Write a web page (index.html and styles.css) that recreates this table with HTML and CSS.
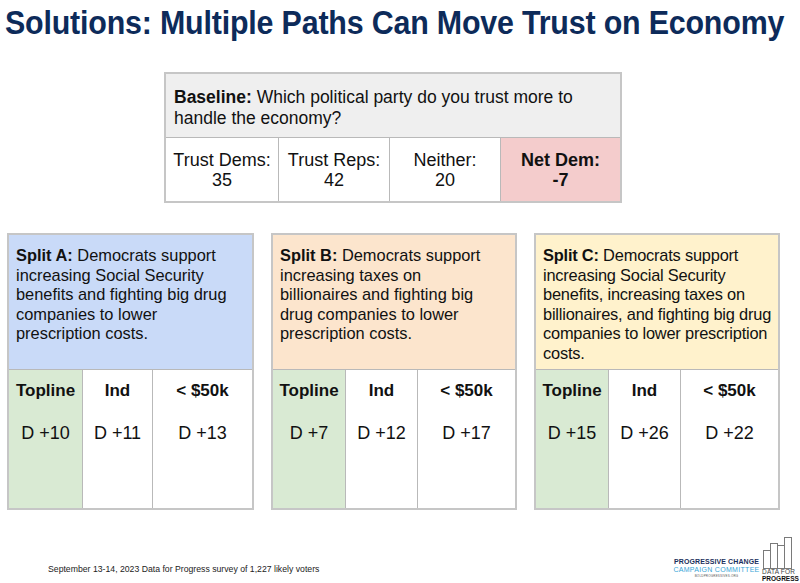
FILE: index.html
```html
<!DOCTYPE html>
<html lang="en">
<head>
<meta charset="utf-8">
<title>Solutions: Multiple Paths Can Move Trust on Economy</title>
<link rel="stylesheet" href="styles.css">
</head>
<body>
<h1 class="title"><span class="title-text">Solutions: Multiple Paths Can Move Trust on Economy</span></h1>

<section class="baseline">
  <div class="baseline-q"><b>Baseline:</b> Which political party do you trust more to<br>handle the economy?</div>
  <div class="baseline-row">
    <div class="bcell c1">Trust Dems:<br>35</div>
    <div class="bcell c2">Trust Reps:<br>42</div>
    <div class="bcell c3">Neither:<br>20</div>
    <div class="bcell net"><b>Net Dem:<br>-7</b></div>
  </div>
</section>

<section class="splits">
  <div class="split split-a">
    <div class="split-q"><b>Split A:</b> Democrats support<br>increasing Social Security<br>benefits and fighting big drug<br>companies to lower<br>prescription costs.</div>
    <div class="split-table">
      <div class="scol topline"><div class="sh">Topline</div><div class="sv">D +10</div></div>
      <div class="scol"><div class="sh">Ind</div><div class="sv">D +11</div></div>
      <div class="scol"><div class="sh">&lt; $50k</div><div class="sv">D +13</div></div>
    </div>
  </div>
  <div class="split split-b">
    <div class="split-q"><b>Split B:</b> Democrats support<br>increasing taxes on<br>billionaires and fighting big<br>drug companies to lower<br>prescription costs.</div>
    <div class="split-table">
      <div class="scol topline"><div class="sh">Topline</div><div class="sv">D +7</div></div>
      <div class="scol"><div class="sh">Ind</div><div class="sv">D +12</div></div>
      <div class="scol"><div class="sh">&lt; $50k</div><div class="sv">D +17</div></div>
    </div>
  </div>
  <div class="split split-c">
    <div class="split-q"><b>Split C:</b> Democrats support<br>increasing Social Security<br>benefits, increasing taxes on<br>billionaires, and fighting big drug<br>companies to lower prescription<br>costs.</div>
    <div class="split-table">
      <div class="scol topline"><div class="sh">Topline</div><div class="sv">D +15</div></div>
      <div class="scol"><div class="sh">Ind</div><div class="sv">D +26</div></div>
      <div class="scol"><div class="sh">&lt; $50k</div><div class="sv">D +22</div></div>
    </div>
  </div>
</section>

<footer class="footer">
  <div class="note">September 13-14, 2023 Data for Progress survey of 1,227 likely voters</div>
  <div class="pccc">
    <div class="pccc-1">PROGRESSIVE CHANGE</div>
    <div class="pccc-2">CAMPAIGN COMMITTEE</div>
    <div class="pccc-3">BOLDPROGRESSIVES.ORG</div>
  </div>
  <div class="dfp">
    <svg class="dfp-bars" width="32" height="32" viewBox="0 0 32 32">
      <g fill="#fff" stroke="#7a7a7a" stroke-width="1">
        <rect x="1.5" y="13.5" width="7" height="18"/>
        <rect x="8.5" y="6.5" width="7" height="25"/>
        <rect x="15.5" y="8.5" width="7" height="23"/>
        <rect x="22.5" y="0.5" width="7" height="31"/>
      </g>
    </svg>
    <div class="dfp-1">DATA FOR</div>
    <div class="dfp-2">PROGRESS</div>
  </div>
</footer>
</body>
</html>
```

FILE: styles.css
```css
* { box-sizing: border-box; }

html, body {
  margin: 0;
  padding: 0;
  background: #ffffff;
}

body {
  width: 800px;
  height: 583px;
  overflow: hidden;
  display: flex;
  flex-direction: column;
  font-family: "Liberation Sans", Arial, sans-serif;
  color: #111;
}

.title {
  margin: 0;
  padding: 4px 0 0 5px;
  width: 800px;
  height: 42px;
  overflow: hidden;
  font-family: "Liberation Sans", Arial, sans-serif;
  font-weight: bold;
  font-size: 33px;
  line-height: 38px;
  color: #0d2b5a;
  white-space: nowrap;
}

.title-text {
  display: inline-block;
  transform: scaleX(0.921);
  transform-origin: left center;
  letter-spacing: -0.2px;
}

/* Baseline box */
.baseline {
  margin: 30px 0 0 164px;
  width: 458px;
  border: 2px solid #c6c6c6;
}

.baseline-q {
  height: 64px;
  background: #efefef;
  padding: 13px 0 0 8px;
  font-size: 17.5px;
  line-height: 21px;
  border-bottom: 1px solid #b9b9b9;
}

.baseline-row {
  display: grid;
  grid-template-columns: 113px 111px 111px 1fr;
  height: 63px;
}

.bcell {
  text-align: center;
  font-size: 18px;
  line-height: 20px;
  padding-top: 12px;
  border-right: 1px solid #b9b9b9;
}

.bcell.net {
  border-right: none;
  background: #f4cccc;
}

/* Splits */
.splits {
  margin-top: 30px;
  padding-left: 7px;
  display: flex;
  gap: 17px;
}

.split {
  width: 246px;
  height: 277px;
  border: 2px solid #c6c6c6;
  display: flex;
  flex-direction: column;
}

.split-a { width: 247px; }

.split-q {
  height: 135px;
  padding: 11px 0 0 7px;
  font-size: 16.4px;
  line-height: 19.6px;
  border-bottom: 1px solid #b9b9b9;
  white-space: nowrap;
  overflow: hidden;
}

.split-c .split-q { letter-spacing: -0.2px; }

.split-a .split-q { background: #c9daf8; }
.split-b .split-q { background: #fce5cd; }
.split-c .split-q { background: #fff2cc; }

.split-table {
  flex: 1;
  display: grid;
  grid-template-columns: 74px 70px 1fr;
}

.split-b .split-table { grid-template-columns: 73px 72px 1fr; }
.split-c .split-table { grid-template-columns: 73px 72px 1fr; }

.scol {
  border-right: 1px solid #b9b9b9;
  text-align: center;
  padding-top: 11px;
}

.scol:last-child { border-right: none; }

.scol.topline { background: #d9ead3; }

.sh {
  font-weight: bold;
  font-size: 17px;
  line-height: 20px;
}

.sv {
  margin-top: 22px;
  font-size: 18px;
  line-height: 20px;
}

/* Footer */
.footer {
  margin-top: auto;
  height: 46px;
  display: flex;
  align-items: flex-end;
  padding-bottom: 1px;
}

.note {
  flex: 1;
  padding: 0 0 7px 48px;
  font-size: 8.7px;
  line-height: 11px;
  color: #222;
}

.pccc {
  width: 91px;
  padding-bottom: 4px;
  text-align: center;
  line-height: 1;
}

.pccc-1 {
  font-size: 7px;
  font-weight: bold;
  color: #1b2f5c;
  letter-spacing: 0.1px;
}

.pccc-2 {
  font-size: 7px;
  color: #39a6d8;
  letter-spacing: 0.3px;
  margin-top: 1px;
}

.pccc-3 {
  font-size: 3px;
  color: #555;
  margin-top: 2px;
  letter-spacing: 0.2px;
}

.dfp {
  width: 37px;
  margin-right: 1px;
  display: flex;
  flex-direction: column;
  align-items: flex-start;
  line-height: 1;
}

.dfp-bars { display: block; }

.dfp-1 {
  font-size: 6.5px;
  color: #444;
  letter-spacing: 0.2px;
}

.dfp-2 {
  font-size: 6.5px;
  font-weight: bold;
  color: #111;
}
```
